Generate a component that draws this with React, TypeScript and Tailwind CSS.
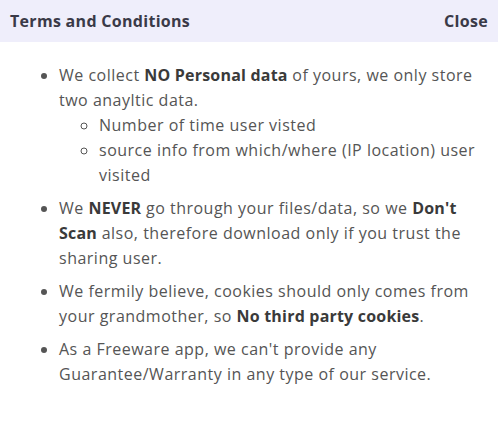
export default function App() {
    return (
        <div className="w-[498px] h-[428px] bg-white" style={{fontFamily: '"Open Sans", "Noto Sans", sans-serif'}}>
            <div className="flex h-[42px] items-center justify-between bg-[#efeefb] px-[10px] text-[16px] font-bold tracking-[0.3px] text-[#3a3a48]">
                <span>Terms and Conditions</span>
                <span>Close</span>
            </div>
            <ul className="list-disc pl-[59px] pr-[10px] pt-[21px] text-[16px] leading-[25px] text-[#555] marker:text-[#555] tracking-[0.5px] whitespace-nowrap">
                <li className="mb-[8px]">
                    We collect <b className="text-[#3a3a3a] tracking-[0.2px]">NO Personal data</b> of yours, we only store<br/>two anayltic data.
                    <ul className="list-[circle] pl-[40px]">
                        <li>Number of time user visted</li>
                        <li>source info from which/where (IP location) user<br/>visited</li>
                    </ul>
                </li>
                <li className="mb-[8px]">
                    We <b className="text-[#3a3a3a] tracking-[0.2px]">NEVER</b> go through your files/data, so we <b className="text-[#3a3a3a] tracking-[0.2px]">Don't</b><br/><b className="text-[#3a3a3a] tracking-[0.2px]">Scan</b> also, therefore download only if you trust the<br/>sharing user.
                </li>
                <li className="mb-[8px]">
                    We fermily believe, cookies should only comes from<br/>your grandmother, so <b className="text-[#3a3a3a] tracking-[0.2px]">No third party cookies</b>.
                </li>
                <li>
                    As a Freeware app, we can't provide any<br/>Guarantee/Warranty in any type of our service.
                </li>
            </ul>
        </div>
    )
}
